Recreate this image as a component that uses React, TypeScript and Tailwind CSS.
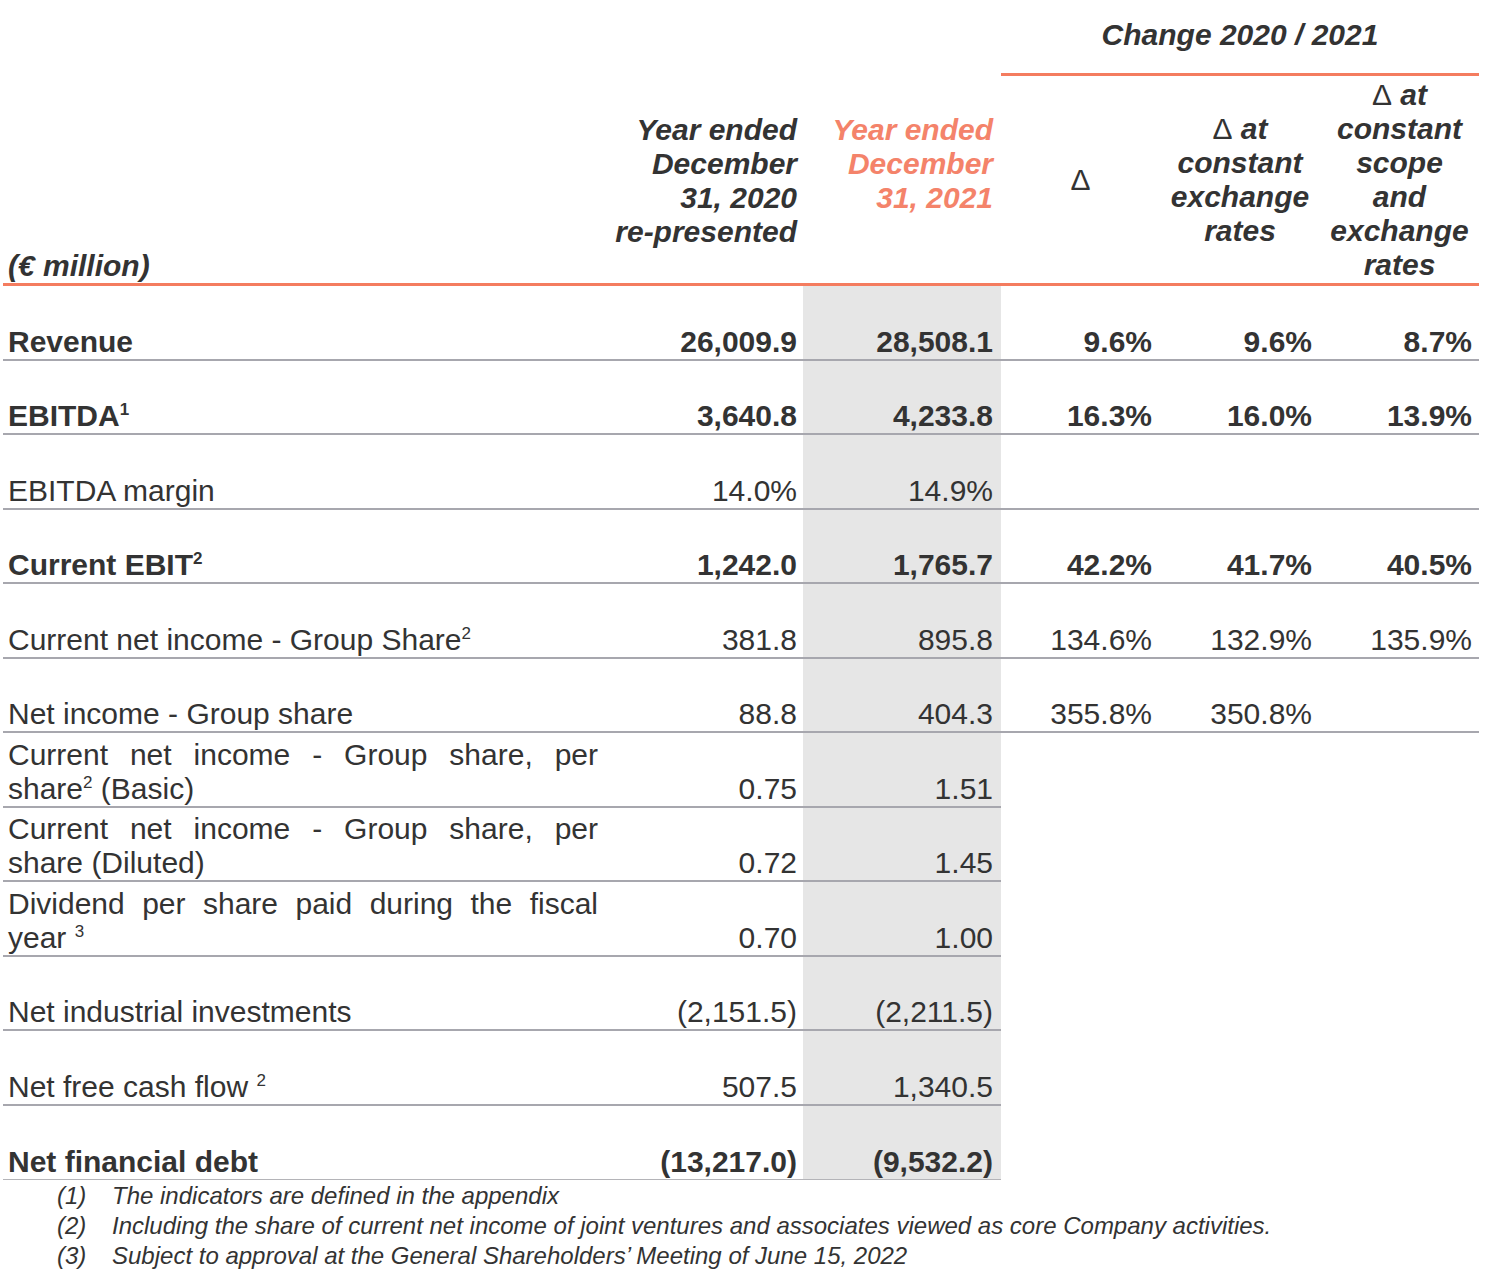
import React from "react";

type RowData = {
  label: React.ReactNode;
  bold?: boolean;
  v: string[];
  full: boolean;
  last?: boolean;
};

const Sup = ({ children, space }: { children: React.ReactNode; space?: boolean }) => (
  <>
    {space ? " " : null}
    <sup className="text-[17px] -top-[11px]">{children}</sup>
  </>
);

const Two = ({ first, second }: { first: string; second: React.ReactNode }) => (
  <div>
    <div className="text-justify [text-align-last:justify]">{first}</div>
    <div>{second}</div>
  </div>
);

const rows: RowData[] = [
  { label: "Revenue", bold: true, v: ["26,009.9", "28,508.1", "9.6%", "9.6%", "8.7%"], full: true },
  { label: <>EBITDA<Sup>1</Sup></>, bold: true, v: ["3,640.8", "4,233.8", "16.3%", "16.0%", "13.9%"], full: true },
  { label: "EBITDA margin", v: ["14.0%", "14.9%", "", "", ""], full: true },
  { label: <>Current EBIT<Sup>2</Sup></>, bold: true, v: ["1,242.0", "1,765.7", "42.2%", "41.7%", "40.5%"], full: true },
  { label: <>Current net income - Group Share<Sup>2</Sup></>, v: ["381.8", "895.8", "134.6%", "132.9%", "135.9%"], full: true },
  { label: "Net income - Group share", v: ["88.8", "404.3", "355.8%", "350.8%", ""], full: true },
  {
    label: <Two first="Current net income - Group share, per" second={<>share<Sup>2</Sup> (Basic)</>} />,
    v: ["0.75", "1.51"],
    full: false,
  },
  {
    label: <Two first="Current net income - Group share, per" second="share (Diluted)" />,
    v: ["0.72", "1.45"],
    full: false,
  },
  {
    label: <Two first="Dividend per share paid during the fiscal" second={<>year<Sup space>3</Sup></>} />,
    v: ["0.70", "1.00"],
    full: false,
  },
  { label: "Net industrial investments", v: ["(2,151.5)", "(2,211.5)"], full: false },
  { label: <>Net free cash flow<Sup space>2</Sup></>, v: ["507.5", "1,340.5"], full: false },
  { label: "Net financial debt", bold: true, v: ["(13,217.0)", "(9,532.2)"], full: false, last: true },
];

const D = () => <span className="not-italic font-normal">Δ</span>;

export default function App() {
  return (
    <div className="w-[1500px] min-h-[1275px] bg-white text-[#333333] text-[30px] leading-[34px] font-['Liberation_Sans',Arial,Helvetica,sans-serif]">
      <div className="pl-[3px]">
        {/* Header */}
        <div className="flex w-[1476px] border-b-[3px] border-[#f47c5f]">
          <div className="flex w-[998px] h-[283px]">
            <div className="w-[597px] pl-[5px] flex items-end font-bold italic">(€ million)</div>
            <div className="w-[203px] pr-[6px] pt-[113px] text-right font-bold italic">
              Year ended
              <br />
              December
              <br />
              31, 2020
              <br />
              re-presented
            </div>
            <div className="w-[198px] pr-[8px] pt-[113px] text-right font-bold italic text-[#f4836a]">
              Year ended
              <br />
              December
              <br />
              31, 2021
            </div>
          </div>
          <div className="flex flex-col w-[478px]">
            <div className="h-[76px] border-b-[3px] border-[#f47c5f] flex items-center justify-center font-bold italic pb-[3px]">
              Change 2020 / 2021
            </div>
            <div className="flex flex-1 font-bold italic text-center">
              <div className="w-[159px] flex items-center justify-center">
                <D />
              </div>
              <div className="w-[160px] flex items-center justify-center">
                <div>
                  <D /> at
                  <br />
                  constant
                  <br />
                  exchange
                  <br />
                  rates
                </div>
              </div>
              <div className="w-[159px] flex items-center justify-center">
                <div>
                  <D /> at
                  <br />
                  constant
                  <br />
                  scope
                  <br />
                  and
                  <br />
                  exchange
                  <br />
                  rates
                </div>
              </div>
            </div>
          </div>
        </div>

        {/* Body rows */}
        {rows.map((r, i) => (
          <div key={i} className={`flex h-[74.5px] ${r.bold ? "font-bold" : ""}`}>
            <div
              className={`flex w-[998px] ${
                r.last ? "border-b border-[#b4b4b8]" : "border-b-2 border-[#a7a7ae]"
              }`}
            >
              <div className="w-[597px] pl-[5px] pr-[2px] flex flex-col justify-end">
                <div>{r.label}</div>
              </div>
              <div className="w-[203px] pr-[6px] flex items-end justify-end">{r.v[0]}</div>
              <div className="w-[198px] pr-[8px] flex items-end justify-end bg-[#e6e6e6]">{r.v[1]}</div>
            </div>
            <div className={`flex w-[478px] ${r.full ? "border-b-2 border-[#a7a7ae]" : ""}`}>
              <div className="w-[159px] pr-[8px] flex items-end justify-end">{r.v[2] ?? ""}</div>
              <div className="w-[160px] pr-[8px] flex items-end justify-end">{r.v[3] ?? ""}</div>
              <div className="w-[159px] pr-[7px] flex items-end justify-end">{r.v[4] ?? ""}</div>
            </div>
          </div>
        ))}
      </div>

      {/* Footnotes */}
      <div className="pl-[57px] text-[24px] leading-[30px] italic pt-[1px]">
        <div className="flex">
          <span className="w-[55px]">(1)</span>
          <span>The indicators are defined in the appendix</span>
        </div>
        <div className="flex">
          <span className="w-[55px]">(2)</span>
          <span>Including the share of current net income of joint ventures and associates viewed as core Company activities.</span>
        </div>
        <div className="flex">
          <span className="w-[55px]">(3)</span>
          <span>Subject to approval at the General Shareholders’ Meeting of June 15, 2022</span>
        </div>
      </div>
    </div>
  );
}
